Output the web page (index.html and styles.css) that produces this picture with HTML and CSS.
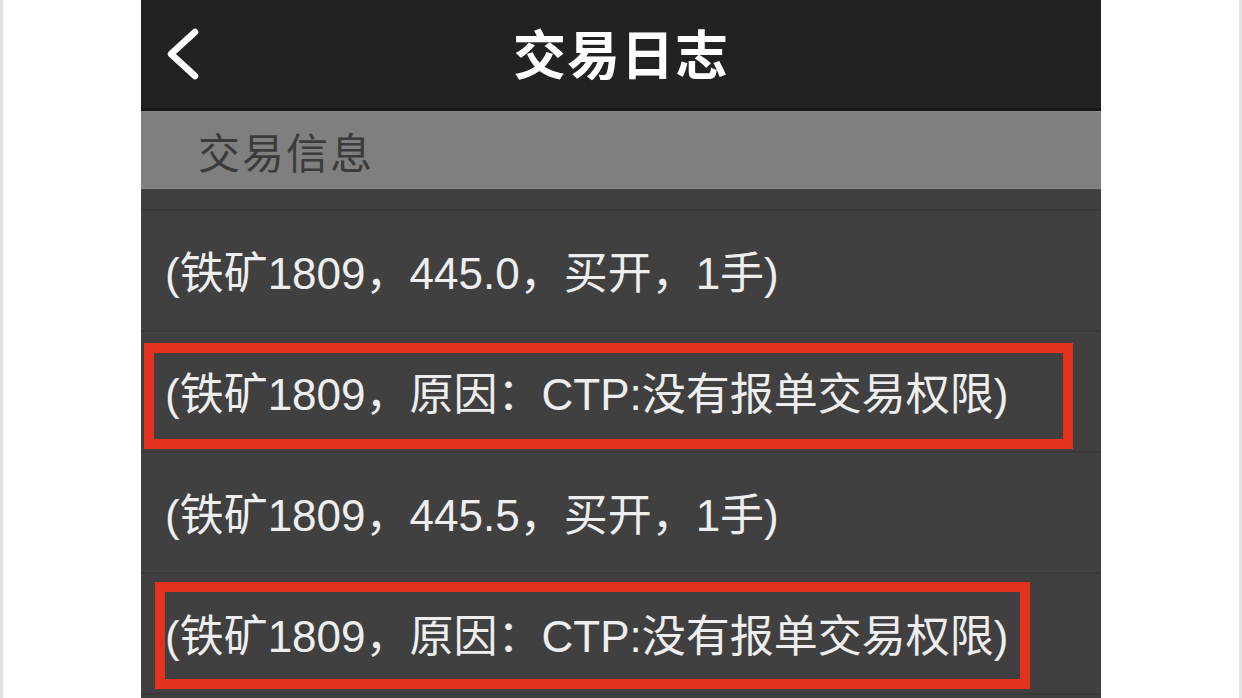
FILE: index.html
```html
<!DOCTYPE html>
<html lang="zh-CN">
<head>
<meta charset="utf-8">
<title>交易日志</title>
<link rel="stylesheet" href="styles.css">
</head>
<body>
<div class="page">
  <div class="phone">
    <header class="nav">
      <div class="nav-left">
        <svg class="back" width="36" height="52" viewBox="0 0 36 52">
          <polyline points="30,4 6,26 30,48" fill="none" stroke="#ffffff" stroke-width="6.5" stroke-linecap="round" stroke-linejoin="round"/>
        </svg>
      </div>
      <h1 class="nav-title">交易日志</h1>
      <div class="nav-right"></div>
    </header>
    <div class="section">交易信息</div>
    <div class="list">
      <div class="spacer"></div>
      <div class="row"><span class="txt">(铁矿1809，445.0，买开，1手)</span></div>
      <div class="row"><span class="txt">(铁矿1809，原因：CTP:没有报单交易权限)</span><div class="mark mark-a"></div></div>
      <div class="row"><span class="txt">(铁矿1809，445.5，买开，1手)</span></div>
      <div class="row"><span class="txt">(铁矿1809，原因：CTP:没有报单交易权限)</span><div class="mark mark-b"></div></div>
    </div>
  </div>
</div>
</body>
</html>
```

FILE: styles.css
```css
html, body {
  margin: 0;
  padding: 0;
  background: #ffffff;
  height: 100%;
  overflow: hidden;
}

.page {
  height: 698px;
  border-left: 3px solid #e2e2e2;
  border-right: 3px solid #e2e2e2;
  display: flex;
  justify-content: center;
  background: #ffffff;
}

.phone {
  width: 960px;
  height: 698px;
  background: #404040;
  display: flex;
  flex-direction: column;
  overflow: hidden;
  font-family: "Liberation Sans", "Noto Sans CJK SC", sans-serif;
}

.nav {
  height: 108px;
  background: #222222;
  border-bottom: 3px solid #171717;
  display: grid;
  grid-template-columns: 1fr auto 1fr;
  align-items: center;
  flex-shrink: 0;
}

.nav-left {
  padding-left: 24px;
  display: flex;
  align-items: center;
}

.back {
  display: block;
  margin-top: -1px;
}

.nav-title {
  margin: 0;
  color: #ffffff;
  font-family: "Noto Sans CJK SC", sans-serif;
  font-weight: 700;
  font-size: 53px;
  line-height: 1;
  letter-spacing: 1px;
  margin-top: -3px;
}

.section {
  background: #7f7f7f;
  border-top: 1px solid #868686;
  border-bottom: 1px solid #8a8a8a;
  box-sizing: border-box;
  height: 78px;
  display: flex;
  align-items: center;
  padding-left: 57px;
  color: #3b3b3b;
  font-family: "Noto Sans CJK SC", sans-serif;
  font-size: 42px;
  letter-spacing: 2px;
  flex-shrink: 0;
}

.list {
  display: flex;
  flex-direction: column;
}

.spacer {
  height: 20px;
  border-bottom: 2px solid #393939;
}

.row {
  position: relative;
  height: 119px;
  border-bottom: 2px solid #393939;
  display: flex;
  align-items: center;
  padding-left: 24px;
  color: #eeeeee;
  font-size: 44px;
}

.txt {
  white-space: nowrap;
  margin-top: -1px;
}

.mark {
  position: absolute;
  border: 10px solid #e5321f;
  box-sizing: border-box;
}

.mark-a {
  left: 3px;
  top: 11px;
  width: 929px;
  height: 106px;
}

.mark-b {
  left: 14px;
  top: 8px;
  width: 875px;
  height: 107px;
}
```
